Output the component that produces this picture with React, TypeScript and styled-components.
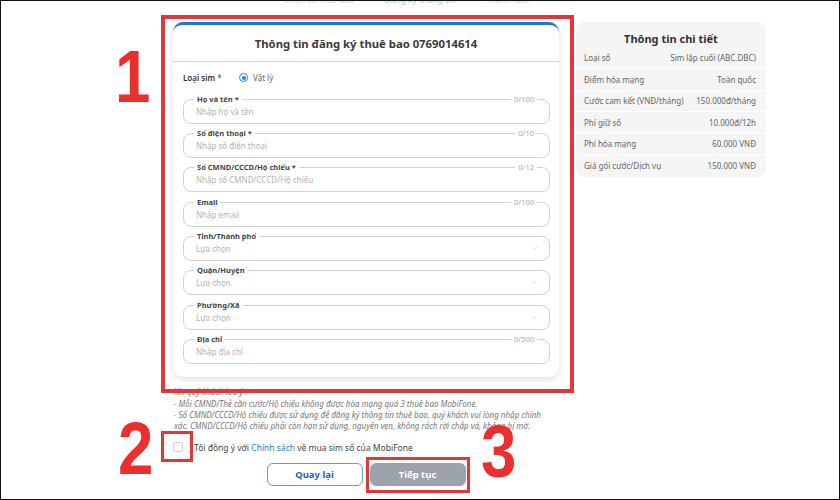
import React from "react";
import styled, { createGlobalStyle } from "styled-components";
import { ChevronDown } from "lucide-react";

const Global = createGlobalStyle`
  html, body { margin: 0; padding: 0; background: #fff; }
  body { font-family: "Noto Sans", "Inter", sans-serif; }
  * { box-sizing: border-box; }
`;

const Frame = styled.div`
  position: relative;
  width: 840px;
  height: 500px;
  border: 1px solid #111;
  overflow: hidden;
  background: #fff;
`;

const TopStrip = styled.div`
  height: 4px;
  overflow: hidden;
  display: flex;
  align-items: flex-end;
  padding-left: 283px;
  gap: 30px;
`;

const StepLabel = styled.span<{ $active?: boolean }>`
  flex-shrink: 0;
  font-size: 8.5px;
  line-height: 11px;
  white-space: nowrap;
  color: ${(p) => (p.$active ? "#b4c4dc" : "#d2d2d2")};
`;

const Content = styled.div`
  display: flex;
  align-items: flex-start;
  gap: 17px;
  padding: 17px 0 0 172px;
`;

const FormColumn = styled.div`
  width: 386px;
  display: flex;
  flex-direction: column;
`;

const Card = styled.section`
  background: #fff;
  border-radius: 10px;
  border-top: 3px solid #1f74e0;
  box-shadow: 0 2px 7px rgba(0, 0, 0, 0.13);
  padding-bottom: 13px;
`;

const CardHeader = styled.div`
  height: 37px;
  display: flex;
  align-items: center;
  justify-content: center;
  border-bottom: 1px solid #c6d8ee;
`;

const Title = styled.h2`
  margin: 0;
  font-size: 11.3px;
  font-weight: 700;
  color: #3a3a3a;
`;

const CardBody = styled.div`
  padding: 9.5px 9px 0 10px;
  display: flex;
  flex-direction: column;
`;

const SimRow = styled.div`
  display: flex;
  align-items: center;
  height: 12px;
  margin-bottom: 15px;
  font-size: 8px;
  color: #333;
`;

const SimLabel = styled.span`
  font-weight: 600;
  width: 56px;
`;

const Req = styled.span`
  color: #3a79c9;
`;

const Radio = styled.span`
  width: 9px;
  height: 9px;
  border-radius: 50%;
  border: 1px solid #2f7de1;
  display: flex;
  align-items: center;
  justify-content: center;
  margin-right: 5px;
  &::after {
    content: "";
    width: 4px;
    height: 4px;
    border-radius: 50%;
    background: #2f7de1;
  }
`;

const RadioText = styled.span`
  color: #666;
`;

const Fields = styled.div`
  display: flex;
  flex-direction: column;
  gap: 9.4px;
`;

const FieldBox = styled.div`
  position: relative;
  height: 25px;
  border: 1px solid #d2d2d2;
  border-radius: 8px;
  display: flex;
  align-items: center;
  padding: 0 10px 0 12px;
`;

const FieldLabel = styled.span`
  position: absolute;
  top: -5px;
  left: 10px;
  padding: 0 3px;
  background: #fff;
  font-size: 7.5px;
  line-height: 9px;
  font-weight: 700;
  color: #444;
`;

const Counter = styled.span`
  position: absolute;
  top: -5px;
  right: 12px;
  padding: 0 3px;
  background: #fff;
  font-size: 7.5px;
  line-height: 9px;
  color: #aaa;
`;

const Input = styled.input`
  flex: 1;
  min-width: 0;
  height: 23px;
  border: 0;
  outline: none;
  background: transparent;
  padding: 0;
  font: inherit;
  font-size: 8px;
  color: #333;
  &::placeholder {
    color: #b3b3b3;
  }
`;

const SelectText = styled.span`
  flex: 1;
  font-size: 8px;
  color: #b3b3b3;
`;

const Notes = styled.div`
  margin-top: 9px;
  padding-left: 1px;
  font-size: 8px;
  line-height: 11.3px;
  font-style: italic;
  color: #777;
  white-space: nowrap;
`;

const NoteLine = styled.div``;

const AgreeRow = styled.label`
  margin-top: 10px;
  display: flex;
  align-items: center;
  height: 12px;
  font-size: 8.5px;
  color: #444;
`;

const CheckBox = styled.span`
  width: 10px;
  height: 10px;
  border: 1px solid #d0d0d0;
  border-radius: 2px;
  margin-right: 11px;
`;

const Link = styled.span`
  color: #2d7bd0;
`;

const ButtonRow = styled.div`
  margin-top: 10px;
  display: flex;
  justify-content: center;
  gap: 7px;
`;

const Button = styled.button<{ $primary?: boolean }>`
  width: 96px;
  height: 23px;
  border-radius: 6px;
  font-family: inherit;
  font-size: 9.5px;
  font-weight: 700;
  border: 1px solid ${(p) => (p.$primary ? "#9da3ac" : "#5d9be0")};
  background: ${(p) => (p.$primary ? "#9da3ac" : "#fff")};
  color: ${(p) => (p.$primary ? "#fff" : "#1f64b8")};
`;

const Detail = styled.aside`
  width: 190px;
  background: #f5f5f6;
  border-radius: 8px;
  padding: 10px 0 2px;
`;

const DetailTitle = styled.h3`
  margin: 0 0 2px;
  text-align: center;
  font-size: 11px;
  line-height: 13px;
  font-weight: 700;
  color: #333;
`;

const DetailRow = styled.div`
  display: flex;
  justify-content: space-between;
  align-items: center;
  height: 21.4px;
  padding: 0 10px 0 8px;
  font-size: 8px;
  color: #666;
  & + & {
    border-top: 1px solid #fff;
  }
`;

const RedBox = styled.div<{ $w: number }>`
  position: absolute;
  border: ${(p) => p.$w}px solid #e2373a;
  pointer-events: none;
`;

const BigNum = styled.span`
  position: absolute;
  font-family: "Liberation Sans", Arial, sans-serif;
  font-weight: 700;
  font-size: 74px;
  line-height: 74px;
  color: #ea2f2f;
  transform: scaleX(0.86);
  transform-origin: left top;
`;

type F = { label: string; req?: boolean; placeholder: string; counter?: string; select?: boolean };

const fields: F[] = [
  { label: "Họ và tên", req: true, placeholder: "Nhập họ và tên", counter: "0/100" },
  { label: "Số điện thoại", req: true, placeholder: "Nhập số điện thoại", counter: "0/10" },
  { label: "Số CMND/CCCD/Hộ chiếu", req: true, placeholder: "Nhập số CMND/CCCD/Hộ chiếu", counter: "0/12" },
  { label: "Email", placeholder: "Nhập email", counter: "0/100" },
  { label: "Tỉnh/Thành phố", placeholder: "Lựa chọn", select: true },
  { label: "Quận/Huyện", placeholder: "Lựa chọn", select: true },
  { label: "Phường/Xã", placeholder: "Lựa chọn", select: true },
  { label: "Địa chỉ", placeholder: "Nhập địa chỉ", counter: "0/500" },
];

const details: [string, string][] = [
  ["Loại số", "Sim lặp cuối (ABC.DBC)"],
  ["Điểm hòa mạng", "Toàn quốc"],
  ["Cước cam kết (VNĐ/tháng)", "150.000đ/tháng"],
  ["Phí giữ số", "10.000đ/12h"],
  ["Phí hòa mạng", "60.000 VNĐ"],
  ["Giá gói cước/Dịch vụ", "150.000 VNĐ"],
];

export default function App() {
  return (
    <>
      <Global />
      <Frame>
        <TopStrip>
          <StepLabel>Chọn số thuê bao</StepLabel>
          <StepLabel $active>Đăng ký thông tin</StepLabel>
          <StepLabel>Thanh toán</StepLabel>
        </TopStrip>
        <Content>
          <FormColumn>
            <Card>
              <CardHeader>
                <Title>Thông tin đăng ký thuê bao 0769014614</Title>
              </CardHeader>
              <CardBody>
                <SimRow>
                  <SimLabel>
                    Loại sim <Req>*</Req>
                  </SimLabel>
                  <Radio />
                  <RadioText>Vật lý</RadioText>
                </SimRow>
                <Fields>
                  {fields.map((f) => (
                    <FieldBox key={f.label}>
                      <FieldLabel>
                        {f.label}
                        {f.req ? " *" : ""}
                      </FieldLabel>
                      {f.counter && <Counter>{f.counter}</Counter>}
                      {f.select ? (
                        <>
                          <SelectText>{f.placeholder}</SelectText>
                          <ChevronDown size={9} color="#c4c4c4" strokeWidth={1.5} />
                        </>
                      ) : (
                        <Input placeholder={f.placeholder} />
                      )}
                    </FieldBox>
                  ))}
                </Fields>
              </CardBody>
            </Card>
            <Notes>
              <NoteLine>Xin quý khách lưu ý :</NoteLine>
              <NoteLine>- Mỗi CMND/Thẻ căn cước/Hộ chiếu không được hòa mạng quá 3 thuê bao MobiFone.</NoteLine>
              <NoteLine>
                - Số CMND/CCCD/Hộ chiếu được sử dụng để đăng ký thông tin thuê bao, quý khách vui lòng nhập chính
              </NoteLine>
              <NoteLine>
                xác. CMND/CCCD/Hộ chiếu phải còn hạn sử dụng, nguyên vẹn, không rách rời chắp vá, không bị mờ.
              </NoteLine>
            </Notes>
            <AgreeRow>
              <CheckBox />
              <span>
                Tôi đồng ý với <Link>Chính sách</Link> về mua sim số của MobiFone
              </span>
            </AgreeRow>
            <ButtonRow>
              <Button>Quay lại</Button>
              <Button $primary>Tiếp tục</Button>
            </ButtonRow>
          </FormColumn>
          <Detail>
            <DetailTitle>Thông tin chi tiết</DetailTitle>
            {details.map(([k, v]) => (
              <DetailRow key={k}>
                <span>{k}</span>
                <span>{v}</span>
              </DetailRow>
            ))}
          </Detail>
        </Content>

        <RedBox $w={4} style={{ left: 160, top: 14, width: 413, height: 378 }} />
        <RedBox $w={3.5} style={{ left: 160, top: 430, width: 32, height: 31 }} />
        <RedBox $w={3.5} style={{ left: 365, top: 456, width: 104, height: 36 }} />
        <BigNum style={{ left: 114, top: 39 }}>1</BigNum>
        <BigNum style={{ left: 117, top: 411 }}>2</BigNum>
        <BigNum style={{ left: 480, top: 414 }}>3</BigNum>
      </Frame>
    </>
  );
}
